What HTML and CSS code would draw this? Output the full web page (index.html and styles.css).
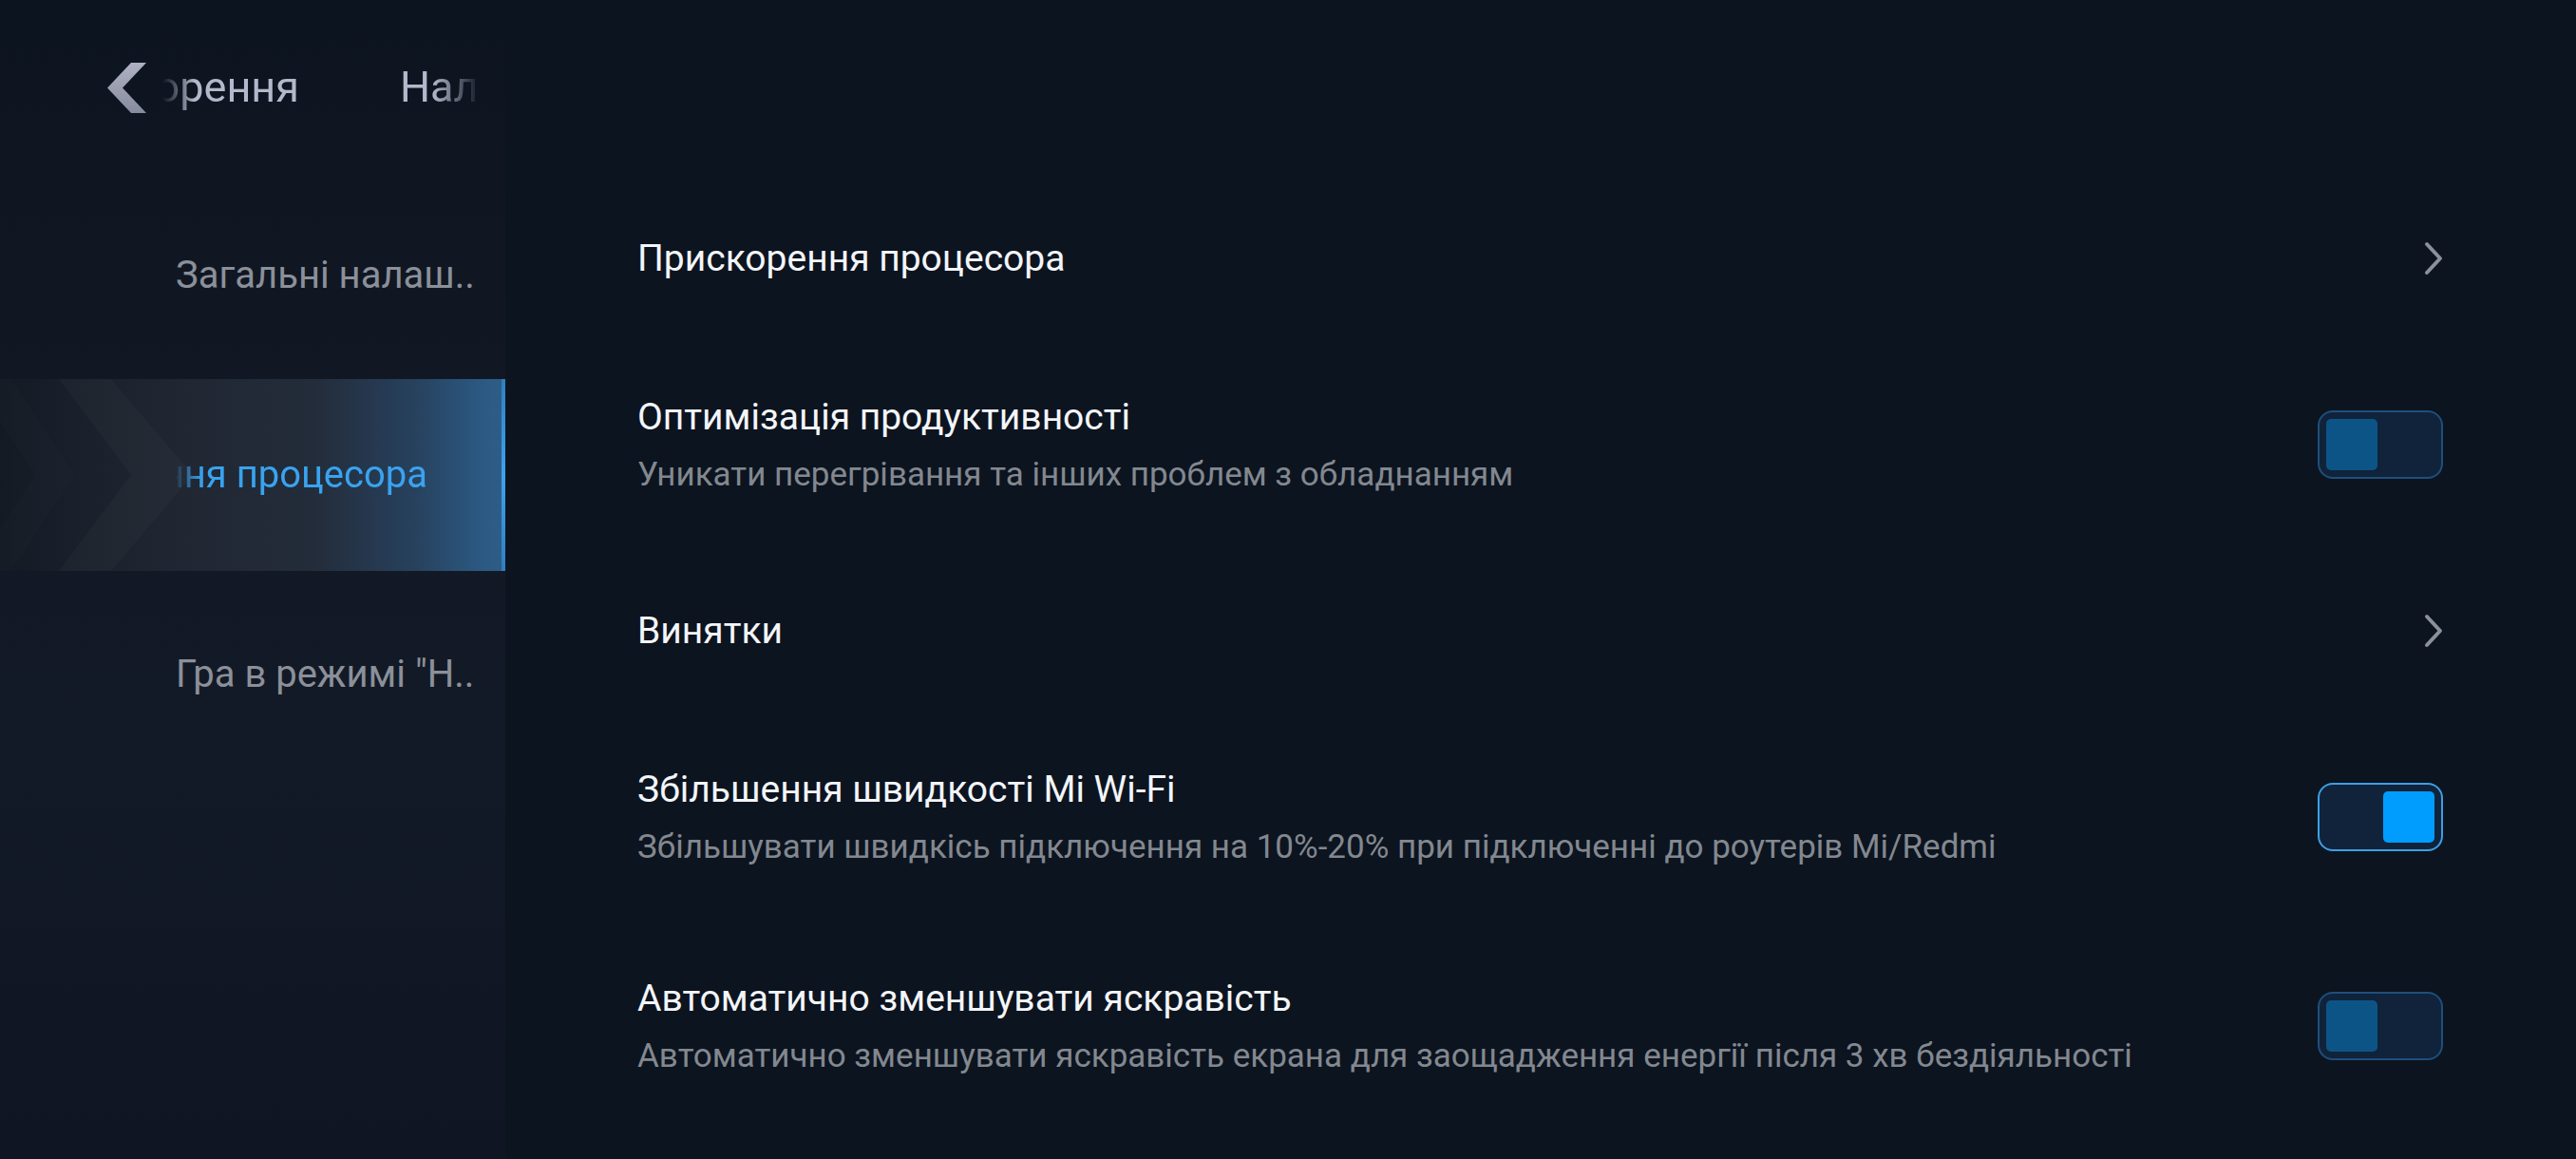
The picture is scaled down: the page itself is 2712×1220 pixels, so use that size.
FILE: index.html
```html
<!DOCTYPE html>
<html lang="uk">
<head>
<meta charset="utf-8">
<title>Налаштування прискорення</title>
<link rel="stylesheet" href="styles.css">
</head>
<body>
<div class="app">
  <aside class="sidebar">
    <header class="topbar">
      <svg class="back" viewBox="0 0 41 53" width="41" height="53" aria-hidden="true">
        <defs>
          <linearGradient id="bk" x1="0" y1="0" x2="0" y2="1">
            <stop offset="0" stop-color="#aeb2c3"/>
            <stop offset="1" stop-color="#878b9d"/>
          </linearGradient>
        </defs>
        <polygon points="25,0 41,0 16,26.5 41,53 25,53 0,26.5" fill="url(#bk)"/>
      </svg>
      <div class="marquee">
        <div class="marquee-lead"><span class="marquee-text">Налаштування прискорення</span></div>
        <span class="marquee-text marquee-next">Налаштування прискорення</span>
      </div>
    </header>
    <nav class="nav">
      <div class="nav-item"><span class="nav-label">Загальні налаш..</span></div>
      <div class="nav-item active">
        <svg class="nav-deco" viewBox="0 0 532 202" preserveAspectRatio="none" aria-hidden="true">
          <polygon points="-30,0 12,0 79,101 12,202 -30,202 37,101" fill="rgba(255,255,255,0.012)"/>
          <polygon points="62,0 117,0 203,101 117,202 62,202 138,101" fill="rgba(255,255,255,0.024)"/>
        </svg>
        <div class="nav-clip">
          <div class="nav-lead"><span class="nav-label-active">Прискорення процесора</span></div>
        </div>
      </div>
      <div class="nav-item"><span class="nav-label">Гра в режимі "Н..</span></div>
    </nav>
  </aside>

  <main class="content">
    <div class="row single">
      <div class="row-text">
        <div class="row-title">Прискорення процесора</div>
      </div>
      <svg class="chev" viewBox="0 0 24 40" width="24" height="40" aria-hidden="true"><path d="M5 5 L19 20 L5 35" fill="none" stroke="#8c9099" stroke-width="4" stroke-linecap="round" stroke-linejoin="round"/></svg>
    </div>

    <div class="row double">
      <div class="row-text">
        <div class="row-title">Оптимізація продуктивності</div>
        <div class="row-sub">Уникати перегрівання та інших проблем з обладнанням</div>
      </div>
      <div class="toggle"><div class="knob"></div></div>
    </div>

    <div class="row single">
      <div class="row-text">
        <div class="row-title">Винятки</div>
      </div>
      <svg class="chev" viewBox="0 0 24 40" width="24" height="40" aria-hidden="true"><path d="M5 5 L19 20 L5 35" fill="none" stroke="#8c9099" stroke-width="4" stroke-linecap="round" stroke-linejoin="round"/></svg>
    </div>

    <div class="row double">
      <div class="row-text">
        <div class="row-title">Збільшення швидкості Mi Wi-Fi</div>
        <div class="row-sub">Збільшувати швидкісь підключення на 10%-20% при підключенні до роутерів Mi/Redmi</div>
      </div>
      <div class="toggle on"><div class="knob"></div></div>
    </div>

    <div class="row double">
      <div class="row-text">
        <div class="row-title">Автоматично зменшувати яскравість</div>
        <div class="row-sub">Автоматично зменшувати яскравість екрана для заощадження енергії після 3 хв бездіяльності</div>
      </div>
      <div class="toggle"><div class="knob"></div></div>
    </div>
  </main>
</div>
</body>
</html>
```

FILE: styles.css
```css
* { box-sizing: border-box; }

html, body {
  margin: 0;
  padding: 0;
  width: 2712px;
  height: 1220px;
  overflow: hidden;
  background: #0c1420;
  font-family: Roboto, "Noto Sans", "Liberation Sans", sans-serif;
}

.app {
  display: flex;
  width: 2712px;
  height: 1220px;
}

/* ---------- sidebar ---------- */
.sidebar {
  width: 532px;
  flex-shrink: 0;
  display: flex;
  flex-direction: column;
  background: linear-gradient(180deg, #0c1420 0%, #0f1622 16%, #121925 40%, #131a27 65%, #0f1522 100%);
}

.topbar {
  height: 184px;
  display: flex;
  align-items: center;
  padding-left: 113px;
}

.back {
  flex-shrink: 0;
  display: block;
}

.marquee {
  margin-left: 17px;
  width: 335px;
  overflow: hidden;
  display: flex;
  align-items: center;
  -webkit-mask-image: linear-gradient(90deg, transparent 0, #000 34px, #000 285px, transparent 335px);
  mask-image: linear-gradient(90deg, transparent 0, #000 34px, #000 285px, transparent 335px);
}

.marquee-lead {
  width: 144px;
  flex-shrink: 0;
  display: flex;
  justify-content: flex-end;
}

.marquee-text {
  flex-shrink: 0;
  white-space: nowrap;
  font-size: 45px;
  line-height: 60px;
  color: #b3b9ca;
}

.marquee-next {
  margin-left: 106px;
}

.nav {
  display: flex;
  flex-direction: column;
  gap: 8px;
  padding-top: 5px;
}

.nav-item {
  position: relative;
  height: 202px;
  display: flex;
  align-items: center;
  padding-left: 185px;
}

.nav-label {
  font-size: 40px;
  line-height: 52px;
  color: #8b9099;
  white-space: nowrap;
}

.nav-item.active {
  background: linear-gradient(90deg, #141a24 0%, #1b212c 18%, #212834 40%, #232c3a 62%, #27415d 82%, #2c5a84 96%, #2d5d88 100%);
}

.nav-item.active::after {
  content: "";
  position: absolute;
  right: 0;
  top: 0;
  width: 4px;
  height: 100%;
  background: linear-gradient(180deg, #2f7fc0 0%, #3fa2ee 50%, #2f7fc0 100%);
}

.nav-deco {
  position: absolute;
  left: 0;
  top: 0;
  width: 532px;
  height: 202px;
}

.nav-clip {
  position: relative;
  width: 320px;
  overflow: hidden;
  display: flex;
  -webkit-mask-image: linear-gradient(90deg, transparent 0, rgba(0,0,0,0.35) 6px, #000 28px);
  mask-image: linear-gradient(90deg, transparent 0, rgba(0,0,0,0.35) 6px, #000 28px);
}

.nav-lead {
  width: 265px;
  flex-shrink: 0;
  display: flex;
  justify-content: flex-end;
}

.nav-label-active {
  flex-shrink: 0;
  white-space: nowrap;
  font-size: 40px;
  line-height: 52px;
  color: #39a3ef;
}

/* ---------- content ---------- */
.content {
  flex: 1;
  display: flex;
  flex-direction: column;
  padding: 186px 140px 0 139px;
}

.row {
  display: flex;
  align-items: center;
  justify-content: space-between;
}

.row.single { height: 172px; }
.row.double { height: 220px; }

.row-text {
  display: flex;
  flex-direction: column;
  gap: 12px;
}

.row-title {
  font-size: 39px;
  line-height: 52px;
  color: #f3f5f8;
  white-space: nowrap;
}

.row-sub {
  font-size: 35px;
  line-height: 46px;
  color: #83888f;
  white-space: nowrap;
}

.chev {
  display: block;
  margin-right: -2px;
}

.toggle {
  width: 132px;
  height: 72px;
  border: 2px solid #1e4f7c;
  border-radius: 16px;
  background: #10233a;
  padding: 7px;
  display: flex;
  justify-content: flex-start;
  flex-shrink: 0;
}

.knob {
  width: 54px;
  height: 54px;
  border-radius: 5px;
  background: #0d5486;
}

.toggle.on {
  border-color: #3d9fe6;
  justify-content: flex-end;
}

.toggle.on .knob {
  background: #009dfe;
}
```
